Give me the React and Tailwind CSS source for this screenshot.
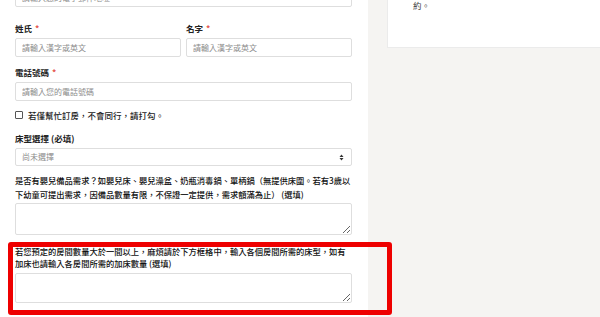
import React from "react";

const font = { fontFamily: '"Noto Sans CJK TC", "Noto Sans", sans-serif' };

function Label({ children, star }) {
  return (
    <div className="text-[8.5px] leading-[14px] font-bold text-[#222]">
      {children}
      {star && <span className="text-[#e5534b] ml-[3px]">*</span>}
    </div>
  );
}

function Input({ placeholder, className = "" }) {
  return (
    <input
      placeholder={placeholder}
      className={
        "block w-full h-[19px] border border-[#dedede] rounded-[2px] bg-white px-[6px] text-[8px] text-[#222] placeholder:text-[#8c8c8c] outline-none " +
        className
      }
    />
  );
}

export default function App() {
  return (
    <div className="flex w-[600px] h-[317px] overflow-hidden relative bg-[#f5f4f2]" style={font}>
      <div className="w-[368px] shrink-0 bg-white pl-[15px] pr-[16px] flex flex-col">
        <Input placeholder="請輸入您的電子郵件地址" className="mt-[-12px]" />
        <div className="flex gap-[5px] mt-[14px]">
          <div className="flex-1 flex flex-col gap-[3px]">
            <Label star>姓氏</Label>
            <Input placeholder="請輸入漢字或英文" />
          </div>
          <div className="flex-1 flex flex-col gap-[3px]">
            <Label star>名字</Label>
            <Input placeholder="請輸入漢字或英文" />
          </div>
        </div>
        <div className="mt-[8px] flex flex-col gap-[3px]">
          <Label star>電話號碼</Label>
          <Input placeholder="請輸入您的電話號碼" />
        </div>
        <div className="mt-[7px] flex items-center h-[14px] gap-[5px]">
          <span className="w-[8px] h-[8px] border border-[#555] rounded-[1px] bg-white" />
          <span className="text-[8.5px] font-medium text-[#222]">若僅幫忙訂房，不會同行，請打勾。</span>
        </div>
        <div className="mt-[9px] flex flex-col gap-[3px]">
          <Label>床型選擇 (必填)</Label>
          <div className="h-[18px] border border-[#dedede] rounded-[2px] flex items-center justify-between px-[6px]">
            <span className="text-[8px] text-[#8c8c8c]">尚未選擇</span>
            <svg width="5" height="7" viewBox="0 0 5 7" className="mr-[1px]">
              <path d="M2.5 0.5 L4.5 3 L0.5 3 Z" fill="#333" />
              <path d="M2.5 6.5 L4.5 4 L0.5 4 Z" fill="#333" />
            </svg>
          </div>
        </div>
        <div className="mt-[7px] text-[8.27px] leading-[14px] font-medium text-[#111]">
          是否有嬰兒備品需求？如嬰兒床、嬰兒澡盆、奶瓶消毒鍋、單柄鍋（無提供床圍。若有3歲以下幼童可提出需求，因備品數量有限，不保證一定提供，需求額滿為止） (選填)
        </div>
        <textarea className="mt-[2px] block w-full h-[32px] border border-[#dedede] rounded-[2px] outline-none text-[8px] shrink-0" />
        <div className="mt-[10px] text-[8.27px] leading-[12px] font-medium text-[#111]">
          若您預定的房間數量大於一間以上，麻煩請於下方框格中，輸入各個房間所需的床型，如有加床也請輸入各房間所需的加床數量 (選填)
        </div>
        <textarea className="mt-[4px] block w-full h-[30px] border border-[#dedede] rounded-[2px] outline-none text-[8px] shrink-0" />
      </div>
      <div className="flex-1 pl-[19px]">
        <div className="h-[48px] bg-white border-l border-b border-[#ebebeb] pl-[25px]">
          <div className="text-[8.5px] leading-[10px] text-[#444]">約。</div>
        </div>
      </div>
      <div className="absolute left-[8px] top-[242px] w-[384px] h-[73px] border-[5px] border-[#ee0000] rounded-[3px] pointer-events-none" />
    </div>
  );
}
